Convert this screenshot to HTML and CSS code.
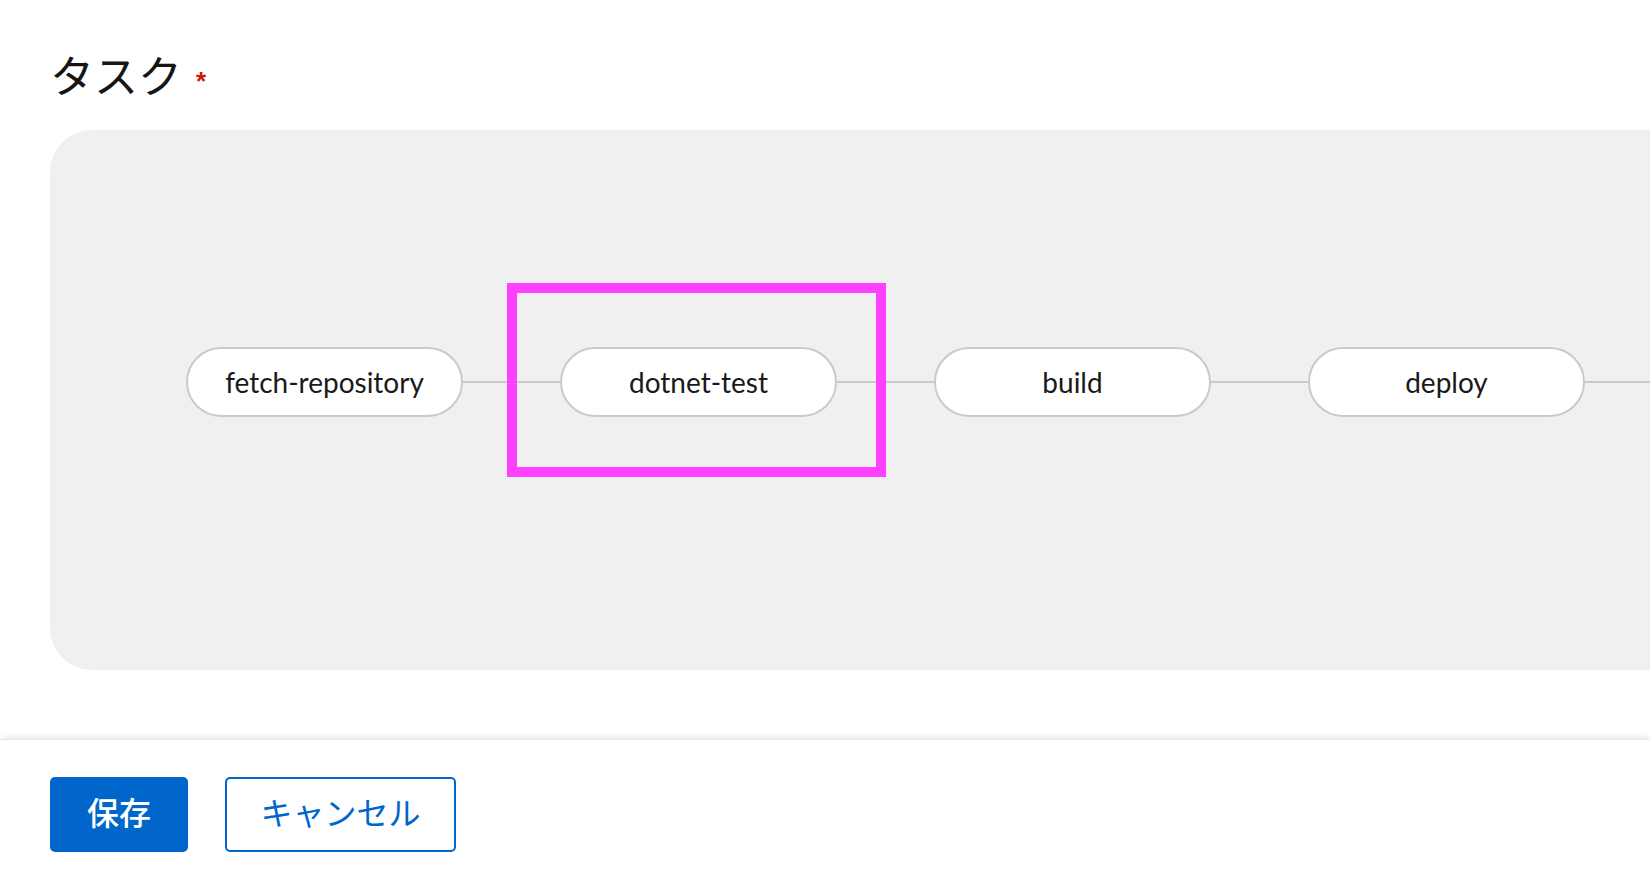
FILE: index.html
```html
<!DOCTYPE html>
<html lang="ja">
<head>
<meta charset="utf-8">
<link rel="stylesheet" href="styles.css">
</head>
<body>
<main class="page">
  <div class="form-body">
    <h2 class="label">タスク<span class="required">*</span></h2>
    <div class="panel">
      <div class="pipeline">
        <div class="node">fetch-repository</div>
        <div class="edge"></div>
        <div class="node node-focus">dotnet-test<span class="highlight"></span></div>
        <div class="edge"></div>
        <div class="node">build</div>
        <div class="edge"></div>
        <div class="node">deploy</div>
        <div class="edge edge-tail"></div>
      </div>
    </div>
  </div>
  <footer class="actions">
    <button class="btn btn-primary">保存</button>
    <button class="btn btn-secondary">キャンセル</button>
  </footer>
</main>
</body>
</html>
```
FILE: styles.css
```css
html, body {
  margin: 0;
  padding: 0;
  background: #ffffff;
  overflow: hidden;
  width: 1650px;
  height: 880px;
}

.page {
  display: flex;
  flex-direction: column;
  height: 880px;
  font-family: "Noto Sans CJK JP", "Noto Sans", sans-serif;
  color: #151515;
}

.form-body {
  padding-left: 50px;
  height: 739px;
  box-sizing: border-box;
}

.label {
  margin: 0;
  padding-top: 46px;
  height: 130px;
  box-sizing: border-box;
  font-size: 44px;
  line-height: 56px;
  font-weight: 400;
  display: flex;
  align-items: flex-start;
}

.required {
  color: #c9190b;
  font-family: "Liberation Sans", sans-serif;
  font-size: 26px;
  font-weight: 700;
  line-height: 26px;
  margin-left: 14px;
  margin-top: 22px;
}

.panel {
  width: 1700px;
  height: 540px;
  background: #f0f0f0;
  border-radius: 42px;
  box-sizing: border-box;
  padding-top: 217px;
  padding-left: 136px;
}

.pipeline {
  display: flex;
  align-items: center;
}

.node {
  position: relative;
  flex: none;
  width: 277px;
  height: 70px;
  box-sizing: border-box;
  border: 2px solid #c8cacc;
  border-radius: 35px;
  background: #ffffff;
  display: flex;
  align-items: center;
  justify-content: center;
  font-family: Lato, "Open Sans", sans-serif;
  font-size: 28px;
  color: #1a1a1a;
}

.edge {
  flex: none;
  width: 97px;
  height: 2px;
  background: #c8cacc;
}

.edge-tail {
  width: 200px;
}

.highlight {
  position: absolute;
  left: -55px;
  top: -66px;
  width: 379px;
  height: 194px;
  box-sizing: border-box;
  border: 10px solid #ff40ff;
  pointer-events: none;
}

.actions {
  flex: none;
  height: 141px;
  box-sizing: border-box;
  padding: 37px 0 0 50px;
  display: flex;
  gap: 37px;
  align-items: flex-start;
  background: #ffffff;
  box-shadow: 0 -4px 6px -1px rgba(0, 0, 0, 0.08);
  border-top: 1px solid #e6e6e6;
  position: relative;
}

.btn {
  height: 75px;
  box-sizing: border-box;
  border-radius: 5px;
  font-family: "Noto Sans CJK JP", "Noto Sans", sans-serif;
  font-size: 32px;
  line-height: 40px;
  padding: 0 0 7px;
  white-space: nowrap;
  text-align: center;
  cursor: pointer;
}

.btn-primary {
  width: 138px;
  background: #0066cc;
  border: 2px solid #0066cc;
  color: #ffffff;
  font-weight: 500;
}

.btn-secondary {
  width: 231px;
  background: #ffffff;
  border: 2px solid #0066cc;
  color: #0066cc;
  font-weight: 400;
}
```
